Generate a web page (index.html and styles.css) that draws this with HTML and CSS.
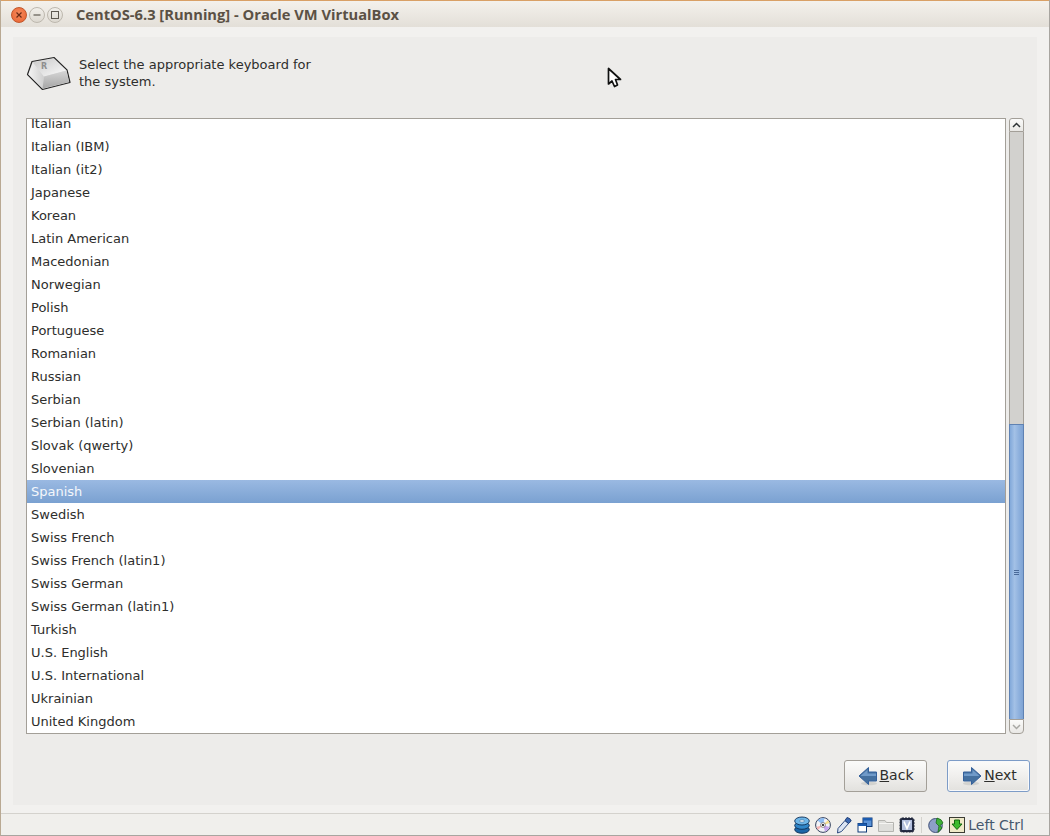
FILE: index.html
```html
<!DOCTYPE html>
<html lang="en">
<head>
<meta charset="utf-8">
<title>CentOS-6.3 [Running] - Oracle VM VirtualBox</title>
<link rel="stylesheet" href="styles.css">
</head>
<body>
<div class="window">
  <header class="titlebar">
    <div class="wm-buttons">
      <span class="wm close"><svg width="10" height="10" viewBox="0 0 10 10"><path d="M2.500 2.500l5 5M7.500 2.500l-5 5" stroke="#6b2a14" stroke-width="1.200" fill="none"/></svg></span>
      <span class="wm"><svg width="10" height="10" viewBox="0 0 10 10"><path d="M1.500 5h7" stroke="#5f5a52" stroke-width="1.200" fill="none"/></svg></span>
      <span class="wm"><svg width="10" height="10" viewBox="0 0 10 10"><rect x="1.500" y="1.500" width="7" height="7" stroke="#5f5a52" fill="none"/></svg></span>
    </div>
    <h1 class="title">CentOS-6.3 [Running] - Oracle VM VirtualBox</h1>
  </header>

  <main class="content">
    <section class="panel">
      <div class="intro">
        <svg class="key-icon" width="46" height="38" viewBox="0 0 46 38">
          <defs>
            <linearGradient id="kf" x1="0" y1="0" x2="0" y2="1"><stop offset="0" stop-color="#d6d6d6"/><stop offset="1" stop-color="#a6a6a6"/></linearGradient>
            <linearGradient id="kt" x1="0" y1="0" x2="1" y2="1"><stop offset="0" stop-color="#c9c9c9"/><stop offset="1" stop-color="#fbfbfb"/></linearGradient>
            <linearGradient id="kl" x1="0" y1="0" x2="1" y2="0"><stop offset="0" stop-color="#f4f4f4"/><stop offset="1" stop-color="#cfcfcf"/></linearGradient>
          </defs>
          <path d="M1.500 19.500L6 6.500 28 2.500 41 15 44 27.500 16.500 34.500Z" fill="#ddd" stroke="#262626" stroke-width="1.200" stroke-linejoin="round"/>
          <path d="M2.500 19.500L7 7.500 18 21.500 16.500 33.500Z" fill="url(#kl)"/>
          <path d="M7 7.500L28 3.500 40.500 15.500 18 21.500Z" fill="url(#kt)"/>
          <path d="M18 21.500L40.500 15.500 43 27 16.500 33.500Z" fill="url(#kf)"/>
          <text class="key-letter" x="15" y="14">R</text>
        </svg>
        <p class="intro-text">Select the appropriate keyboard for<br>the system.</p>
      </div>

      <div class="chooser">
        <div class="list">
          <ul class="rows">
            <li>Italian</li>
            <li>Italian (IBM)</li>
            <li>Italian (it2)</li>
            <li>Japanese</li>
            <li>Korean</li>
            <li>Latin American</li>
            <li>Macedonian</li>
            <li>Norwegian</li>
            <li>Polish</li>
            <li>Portuguese</li>
            <li>Romanian</li>
            <li>Russian</li>
            <li>Serbian</li>
            <li>Serbian (latin)</li>
            <li>Slovak (qwerty)</li>
            <li>Slovenian</li>
            <li class="selected">Spanish</li>
            <li>Swedish</li>
            <li>Swiss French</li>
            <li>Swiss French (latin1)</li>
            <li>Swiss German</li>
            <li>Swiss German (latin1)</li>
            <li>Turkish</li>
            <li>U.S. English</li>
            <li>U.S. International</li>
            <li>Ukrainian</li>
            <li>United Kingdom</li>
          </ul>
        </div>
        <div class="scrollbar">
          <div class="sb-btn sb-up"><svg width="9" height="6" viewBox="0 0 9 6"><path d="M1 5l3.500-3.500L8 5" stroke="#2e3436" stroke-width="1.500" fill="none"/></svg></div>
          <div class="sb-trough"></div>
          <div class="sb-thumb"><span class="grip"></span><span class="grip"></span><span class="grip"></span></div>
          <div class="sb-btn sb-down"><svg width="9" height="6" viewBox="0 0 9 6"><path d="M1 1l3.500 3.500L8 1" stroke="#a8a8a4" stroke-width="1.500" fill="none"/></svg></div>
        </div>
      </div>

      <div class="actions">
        <button class="btn" type="button">
          <svg width="20" height="20" viewBox="0 0 20 20"><ellipse cx="11" cy="17.500" rx="8" ry="1.800" fill="#d2d2cf"/><path d="M1 10L10.500 1.500V6H18.500V15H10.500V18.500Z" fill="#44709f" stroke="#34609b"/><path d="M3 9.500L9.500 3.800V7.500H18V10H3Z" fill="#6f9ac9"/></svg>
          <span><u>B</u>ack</span>
        </button>
        <button class="btn btn-focus" type="button">
          <svg width="20" height="20" viewBox="0 0 20 20"><ellipse cx="9" cy="17.500" rx="8" ry="1.800" fill="#d2d2cf"/><path d="M19 10L9.500 1.500V6H1.500V15H9.500V18.500Z" fill="#44709f" stroke="#34609b"/><path d="M2 7.500H10.500V3.800L17 9.500V10H2Z" fill="#6f9ac9"/></svg>
          <span><u>N</u>ext</span>
        </button>
      </div>
    </section>
  </main>

  <footer class="statusbar">
    <svg class="st-icon" width="16" height="18" viewBox="0 0 16 18"><g stroke="#0f2f55" stroke-width=".9"><ellipse cx="8" cy="13.500" rx="7.300" ry="3.800" fill="#1c67a8"/><ellipse cx="8" cy="9.500" rx="7.300" ry="3.800" fill="#2f86c8"/><ellipse cx="8" cy="5" rx="7.300" ry="4" fill="#6db6e8"/></g><ellipse cx="8" cy="5" rx="2.500" ry="1.200" fill="#e8f4fb" stroke="#1c4f80" stroke-width=".5"/></svg>
    <svg class="st-icon" width="16" height="16" viewBox="0 0 16 16"><circle cx="8" cy="8" r="7.400" fill="#f2f3f8" stroke="#34425e"/><path d="M8 8L2.500 3.500A7 7 0 0 1 9.500 1.200Z" fill="#8dbcf2"/><path d="M8 8L14.500 10A7 7 0 0 1 10 14.500Z" fill="#c8a6ee"/><path d="M8 8L14.700 6 13 3Z" fill="#f6de8c"/><path d="M8 8L3 13 1.300 10Z" fill="#f7b4b4"/><circle cx="8" cy="8" r="2.400" fill="#fff" stroke="#444" stroke-width=".6"/><circle cx="8" cy="8" r="1.100" fill="#111"/></svg>
    <svg class="st-icon" width="16" height="18" viewBox="0 0 16 18"><path d="M1.500 17L2 12.500 9 4.500 12.500 7.500 5.500 15.500Z" fill="#dbe4f3" stroke="#2d4a80"/><path d="M9 4.500L11 1.500Q14.500 2 15.200 5L12.500 7.500Z" fill="#3c69b3" stroke="#1f3f78"/></svg>
    <svg class="st-icon" width="16" height="16" viewBox="0 0 16 16"><rect x="6" y="1" width="9" height="8.500" fill="#5b93d8" stroke="#0f3a78"/><rect x="6" y="1" width="9" height="2.500" fill="#1c5cb0"/><rect x="1" y="6.500" width="8.500" height="8.500" fill="#fff" stroke="#0f3a78"/><rect x="1" y="6.500" width="8.500" height="2.500" fill="#1c5cb0"/></svg>
    <svg class="st-icon" width="16" height="16" viewBox="0 0 16 16"><path d="M.5 14.500V3.500H7L8.500 5.500H15.500V14.500Z" fill="#dededb" stroke="#b4b4b0"/><path d="M1 6.500H15" stroke="#f5f5f3"/></svg>
    <svg class="st-icon" width="16" height="16" viewBox="0 0 16 16"><rect x="1" y="1" width="14" height="14" rx="2" fill="#242c44" stroke="#1a2033" stroke-dasharray="2 1"/><rect x="3" y="3" width="10" height="10" fill="#b4c0de"/><path d="M5 4.500L8 11.500 11 4.500" stroke="#fff" stroke-width="1.600" fill="none"/></svg>
    <span class="st-sep"></span>
    <svg class="st-icon" width="16" height="16" viewBox="0 0 16 16"><ellipse cx="7.500" cy="8.500" rx="6.800" ry="7" fill="#8d9fc6" stroke="#42527a"/><path d="M9 1Q14 2 15 6L12 8.500 14 11 10 15.500 10.500 11.500 11 9 8 6Z" fill="#3fb13a" stroke="#14610f" stroke-width=".7"/></svg>
    <svg class="st-icon" width="16" height="16" viewBox="0 0 16 16"><rect x=".5" y=".5" width="15" height="15" fill="#efe9c8" stroke="#3c3c34"/><path d="M5.500 3H10.500V7H13L8 12.500 3 7H5.500Z" fill="#3dbb2e" stroke="#14670f"/></svg>
    <span class="host-key">Left Ctrl</span>
  </footer>
</div>
<svg class="cursor" width="16" height="22" viewBox="0 0 16 22"><path d="M1.500 1.500V17L5 14 7.500 19.500 10.500 18 8.500 12.500H13.500Z" fill="#fff" stroke="#111" stroke-width="1.700" stroke-linejoin="round"/></svg>
</body>
</html>
```

FILE: styles.css
```css
* { box-sizing: border-box; }
html, body { margin: 0; padding: 0; }
body {
  width: 1050px;
  height: 836px;
  overflow: hidden;
  position: relative;
  font-family: "DejaVu Sans", sans-serif;
  font-size: 13px;
  color: #2e2e2c;
  background: #f2f1ef;
}
.window {
  height: 836px;
  display: flex;
  flex-direction: column;
  border-left: 1px solid #b9a993;
  border-right: 1px solid #a8a5a0;
  border-bottom: 1px solid #a8a5a0;
}
.titlebar {
  height: 27px;
  flex: none;
  display: flex;
  align-items: center;
  padding: 1px 0 0 10px;
  background: linear-gradient(#f4f1ec, #e3dfd8);
  border-top: 1px solid #d9a066;
}
.wm-buttons { display: flex; gap: 2px; }
.wm {
  width: 16px;
  height: 16px;
  border-radius: 50%;
  display: flex;
  align-items: center;
  justify-content: center;
  border: 1px solid #bdb8ae;
  background: linear-gradient(#f1efea, #dcd8d0);
}
.wm.close {
  border-color: #c2562a;
  background: radial-gradient(circle at 50% 40%, #f58a5c, #e9622f);
}
.title {
  margin: -2px 0 0 13px;
  font-family: "Open Sans", sans-serif;
  font-size: 14.700px;
  font-weight: 700;
  color: #5b5145;
  white-space: nowrap;
}
.content {
  flex: 1;
  min-height: 0;
  padding: 10px 12px 8px 12px;
}
.panel {
  height: 768px;
  background: #edecea;
  padding: 0 7px 0 13px;
  display: flex;
  flex-direction: column;
}
.intro {
  height: 81px;
  flex: none;
  display: flex;
  align-items: flex-start;
  padding-top: 18px;
}
.key-icon { flex: none; margin: 0 7px 0 0; }
.key-letter { font-family: "DejaVu Sans", sans-serif; font-size: 8px; font-weight: 700; fill: #8f8f8f; }
.intro-text { margin: 1px 0 0; line-height: 17px; }
.chooser {
  height: 616px;
  flex: none;
  display: flex;
  gap: 3px;
}
.list {
  width: 980px;
  flex: none;
  height: 616px;
  overflow: hidden;
  background: #fff;
  border: 1px solid #a39f98;
}
.rows {
  list-style: none;
  margin: -7px 0 0;
  padding: 0;
}
.rows li {
  height: 23px;
  line-height: 23px;
  padding-left: 4px;
  color: #2e2e2c;
  white-space: nowrap;
}
.rows li.selected {
  color: #f4f7fb;
  background: linear-gradient(#9ab9e2, #7aa1d1);
}
.scrollbar {
  width: 15px;
  height: 616px;
  flex: none;
  display: flex;
  flex-direction: column;
}
.sb-btn {
  height: 15px;
  flex: none;
  display: flex;
  align-items: center;
  justify-content: center;
  border: 1px solid #a39f98;
  background: linear-gradient(#fbfbfa, #e9e8e5);
}
.sb-up { height: 14px; border-radius: 3px 3px 0 0; }
.sb-down { border-radius: 0 0 4px 4px; }
.sb-trough {
  height: 292px;
  flex: none;
  background: #d2d1ce;
  border-left: 1px solid #a39f98;
  border-right: 1px solid #a39f98;
}
.sb-thumb {
  height: 295px;
  flex: none;
  display: flex;
  flex-direction: column;
  align-items: center;
  justify-content: center;
  gap: 1px;
  border: 1px solid #5f82b3;
  border-bottom: 0;
  background: linear-gradient(90deg, #82a9da, #a3c1e6 35%, #8db0dd 70%, #7fa4d4);
}
.grip { width: 5px; height: 1px; background: #4a6a99; }
.actions {
  flex: 1;
  display: flex;
  justify-content: flex-end;
  align-items: flex-start;
  gap: 20px;
  padding-top: 26px;
}
.btn {
  width: 83px;
  height: 32px;
  display: flex;
  align-items: center;
  justify-content: center;
  gap: 2px;
  padding: 0 0 2px;
  font: inherit;
  font-size: 14px;
  color: #2e2e2c;
  border: 1px solid #a39f98;
  border-radius: 3px;
  background: linear-gradient(#fbfbfa, #f0efed 50%, #e2e1de);
}
.btn svg { margin-top: 2px; }
.btn-focus {
  padding-left: 2px;
  border-color: #7d9cc7;
  box-shadow: inset 0 0 0 1px #f8f9fb;
}
.statusbar {
  height: 22px;
  flex: none;
  display: flex;
  align-items: center;
  justify-content: flex-end;
  gap: 5px;
  padding-right: 25px;
  background: #f0efec;
  border-top: 1px solid #d4d2cd;
}
.st-icon { flex: none; }
.st-sep { width: 1px; height: 16px; margin: 0 1px; background: #d4d2cd; }
.host-key { color: #46586e; font-size: 14px; margin-left: -2px; }
.cursor { position: absolute; left: 607px; top: 67px; }
```
